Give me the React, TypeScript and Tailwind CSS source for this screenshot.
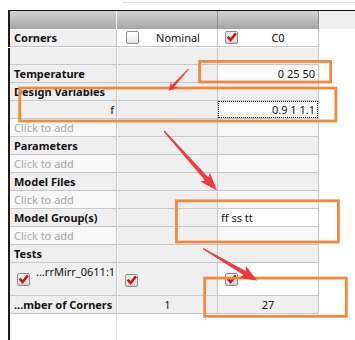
import React from "react";

const F = "font-['Noto_Sans','Open_Sans',sans-serif]";

function Box({ checked, id }: { checked?: boolean; id: string }) {
  return (
    <svg width="13" height="13" viewBox="0 0 13 13" className="block shrink-0">
      <defs>
        <linearGradient id={id} x1="0" y1="0" x2="0" y2="1">
          <stop offset="0" stopColor={checked ? "#f6f6f6" : "#ffffff"} />
          <stop offset="0.8" stopColor={checked ? "#e2e2e2" : "#efefef"} />
          <stop offset="1" stopColor={checked ? "#bdbdbd" : "#d4d4d4"} />
        </linearGradient>
      </defs>
      <rect x="0.5" y="0.5" width="12" height="12" rx="1.5" fill={`url(#${id})`} stroke="#8f8f8f" />
      {checked && (
        <path d="M2.6 5.6 L5.6 9 L10.9 2.4" fill="none" stroke="#d60f0f" strokeWidth="2.5" />
      )}
    </svg>
  );
}

function Row({
  h,
  a,
  aCls,
  b,
  bCls,
  c,
  cCls,
}: {
  h: string;
  a?: React.ReactNode;
  aCls: string;
  b?: React.ReactNode;
  bCls: string;
  c?: React.ReactNode;
  cCls: string;
}) {
  return (
    <div className={`flex ${h}`}>
      <div className={`w-[107px] shrink-0 border-b border-r border-b-[#c8c8c8] border-r-[#c8c8c8] flex ${aCls}`}>{a}</div>
      <div className={`w-[101px] shrink-0 border-b border-r border-l border-b-[#c8c8c8] border-r-[#c8c8c8] border-l-white flex ${bCls}`}>{b}</div>
      <div className={`w-[101px] shrink-0 border-b border-r border-b-[#c8c8c8] border-r-[#c8c8c8] flex ${cCls}`}>{c}</div>
    </div>
  );
}

function arrowPts(tx: number, ty: number, px: number, py: number, hl: number, hw: number, nw: number, tw: number) {
  const dx = px - tx;
  const dy = py - ty;
  const L = Math.hypot(dx, dy);
  const ux = dx / L;
  const uy = dy / L;
  const nx = -uy;
  const ny = ux;
  const bx = px - ux * hl;
  const by = py - uy * hl;
  const kx = bx + ux * 2.5;
  const ky = by + uy * 2.5;
  const pts = [
    [tx + nx * tw, ty + ny * tw],
    [kx + nx * nw, ky + ny * nw],
    [bx + nx * hw, by + ny * hw],
    [px, py],
    [bx - nx * hw, by - ny * hw],
    [kx - nx * nw, ky - ny * nw],
    [tx - nx * tw, ty - ny * tw],
  ];
  return pts.map((p) => `${p[0].toFixed(1)},${p[1].toFixed(1)}`).join(" ");
}

const G = "bg-[#efefef]";

export default function App() {
  const bold = "font-bold items-center pl-[4px] whitespace-nowrap";
  const click = "bg-[#f8f8f8] items-center pl-[4px] text-[#a8a8a8] whitespace-nowrap";
  return (
    <div className={`relative flex h-[340px] w-[355px] flex-col overflow-hidden bg-white ${F} text-[11px] leading-[17px] text-[#141414]`}>
      {/* top strip */}
      <div className="h-[10px] shrink-0 pl-[122px] pt-[2px]">
        <div className="h-px bg-[#e0e0e0]" />
      </div>

      {/* frozen header section */}
      <div className="ml-[8px] shrink-0 border-l-2 border-t border-l-[#1e1e1e] border-t-[#111]">
        <div className="flex h-[18px]">
          <div className="w-[107px] shrink-0 border-r border-r-[#f2f2f2] bg-linear-to-b from-[#d2d2d2] to-[#a7a7a7]" />
          <div className="w-[101px] shrink-0 border-r border-r-[#8c8c8c] bg-linear-to-b from-[#d2d2d2] to-[#a7a7a7]" />
          <div className="w-[101px] shrink-0 border-r border-r-[#8c8c8c] bg-linear-to-b from-[#d2d2d2] to-[#a7a7a7]" />
          <div className="flex-1 bg-[#ededed]" />
        </div>
        <Row
          h="h-[18px]"
          a="Corners"
          aCls="bg-[#f0f0f0] font-bold items-center pl-[4px]"
          b={
            <>
              <div className="ml-[8px]">
                <Box id="cb-nom" />
              </div>
              <div className="flex-1 text-center">Nominal</div>
            </>
          }
          bCls="bg-white items-center"
          c={
            <>
              <div className="ml-[7px]">
                <Box id="cb-c0" checked />
              </div>
              <div className="flex-1 text-center">C0</div>
            </>
          }
          cCls="bg-white items-center"
        />
      </div>

      {/* separator */}
      <div className="h-px shrink-0 bg-white" />

      {/* body */}
      <div className="ml-[8px] flex flex-1 flex-col border-l-2 border-l-[#1e1e1e]">
        <Row h="h-[17px]" aCls={G} bCls={G} cCls={G} />
        <Row
          h="h-[18px]"
          a="Temperature"
          aCls={`${G} ${bold}`}
          bCls={G}
          c="0 25 50"
          cCls="bg-white items-center justify-end pr-[3px]"
        />
        <Row h="h-[18px]" a="Design Variables" aCls={`${G} ${bold}`} bCls={G} cCls={G} />
        <Row
          h="h-[18px]"
          a="f"
          aCls={`${G} items-center justify-end pr-[2px]`}
          bCls={G}
          c={
            <div className="flex h-full w-full items-center justify-end border border-dotted border-black bg-white pr-[2px]">
              0.9 1 1.1
            </div>
          }
          cCls="bg-white"
        />
        <Row h="h-[18px]" a="Click to add" aCls={click} bCls={G} cCls="bg-[#f8f8f8]" />
        <Row h="h-[18px]" a="Parameters" aCls={`${G} ${bold}`} bCls={G} cCls={G} />
        <Row h="h-[18px]" a="Click to add" aCls={click} bCls={G} cCls="bg-[#f8f8f8]" />
        <Row h="h-[18px]" a="Model Files" aCls={`${G} ${bold}`} bCls={G} cCls={G} />
        <Row h="h-[18px]" a="Click to add" aCls={click} bCls={G} cCls="bg-[#f8f8f8]" />
        <Row
          h="h-[18px]"
          a="Model Group(s)"
          aCls={`${G} ${bold}`}
          bCls={G}
          c="ff ss tt"
          cCls="bg-white items-center pl-[3px]"
        />
        <Row h="h-[18px]" a="Click to add" aCls={click} bCls={G} cCls="bg-[#f8f8f8]" />
        <Row h="h-[18px]" a="Tests" aCls={`${G} ${bold}`} bCls={G} cCls={G} />
        <Row
          h="h-[33px]"
          a={
            <>
              <div className="ml-[7px] self-center">
                <Box id="cb-t1" checked />
              </div>
              <div className="ml-[6px] whitespace-nowrap">...rrMirr_0611:1</div>
            </>
          }
          aCls={`${G} items-start`}
          b={
            <div className="ml-[7px] mt-[2px]">
              <Box id="cb-t2" checked />
            </div>
          }
          bCls={`${G} items-center`}
          c={
            <div className="ml-[7px]">
              <Box id="cb-t3" checked />
            </div>
          }
          cCls="bg-white items-center"
        />
        <Row
          h="h-[18px]"
          a="...mber of Corners"
          aCls={`${G} ${bold}`}
          b={<div className="flex-1 text-center">1</div>}
          bCls={`${G} items-center`}
          c={<div className="flex-1 text-center">27</div>}
          cCls={`${G} items-center`}
        />
        <div className="flex flex-1">
          <div className="w-[107px] border-r border-r-[#e2e2e2]" />
        </div>
      </div>

      {/* annotations */}
      <svg className="pointer-events-none absolute left-0 top-0" width="355" height="340" viewBox="0 0 355 340">
        <g fill="none" stroke="#f7883b" strokeWidth="2.8">
          <rect x="199.6" y="61.4" width="131" height="20.6" />
          <rect x="19.7" y="88" width="316.2" height="33" />
          <rect x="176.4" y="200.8" width="162" height="41.2" />
          <rect x="204.7" y="278.1" width="141.6" height="38.2" />
        </g>
        <g fill="#f23a3a">
          <polygon points={arrowPts(188.5, 69, 168.5, 91, 9, 4.5, 1.4, 0.5)} />
          <polygon points={arrowPts(164, 131, 217, 190.5, 18, 6.5, 2.3, 0.7)} />
          <polygon points={arrowPts(203, 248.5, 257, 280.5, 17, 7, 2.3, 0.7)} />
        </g>
      </svg>
    </div>
  );
}
